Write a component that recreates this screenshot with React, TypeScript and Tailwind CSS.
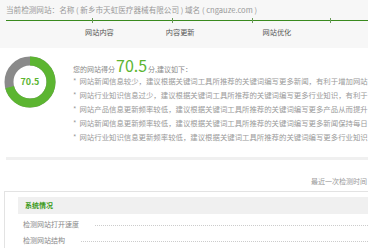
import React from "react";

const font = { fontFamily: '"Noto Sans CJK SC", "Noto Sans", sans-serif' };

function Donut() {
  const r = 21;
  const c = 2 * Math.PI * r;
  const green = c * 0.705;
  return (
    <div className="relative w-[52px] h-[52px]">
      <svg width="52" height="52" viewBox="0 0 52 52">
        <circle cx="26" cy="26" r={r} fill="none" stroke="#8a8a8a" strokeWidth="9" />
        <circle
          cx="26"
          cy="26"
          r={r}
          fill="none"
          stroke="#5cb531"
          strokeWidth="9"
          strokeDasharray={`${green} ${c}`}
          transform="rotate(-90 26 26)"
        />
      </svg>
      <div className="absolute inset-0 flex items-center justify-center text-[9px] font-bold text-[#5cb531]">
        70.5
      </div>
    </div>
  );
}

const bullets = [
  "网站新闻信息较少，建议根据关键词工具所推荐的关键词编写更多新闻，有利于增加网站",
  "网站行业知识信息过少，建议根据关键词工具所推荐的关键词编写更多行业知识，有利于",
  "网站产品信息更新频率较低，建议根据关键词工具所推荐的关键词编写更多产品从而提升",
  "网站新闻信息更新频率较低，建议根据关键词工具所推荐的关键词编写更多新闻保持每日",
  "网站行业知识信息更新频率较低，建议根据关键词工具所推荐的关键词编写更多行业知识",
];

export default function App() {
  return (
    <div className="w-[368px] h-[249px] overflow-hidden bg-white" style={font}>
      <div className="bg-[#f7f7f7] h-[48px] pt-[4px]">
        <div className="pl-[6px] text-[7.6px] leading-[11px] text-[#999] whitespace-nowrap">
          当前检测网站：名称 ( 新乡市天虹医疗器械有限公司 ) 域名 ( cngauze.com )
        </div>
        <div className="relative ml-[6px] mt-[5px] h-[1px] bg-[#3a8a1e]">
          <div className="absolute left-[86px] top-[-2px] w-[1px] h-[5px] bg-[#6a9a5a]" />
          <div className="absolute left-[166px] top-[-2px] w-[1px] h-[5px] bg-[#6a9a5a]" />
          <div className="absolute left-[246px] top-[-2px] w-[1px] h-[5px] bg-[#6a9a5a]" />
          <div className="absolute left-[324px] top-[-2px] w-[1px] h-[5px] bg-[#6a9a5a]" />
        </div>
        <div className="flex mt-[6px] text-[7.2px] leading-[11px] text-[#555] whitespace-nowrap">
          <span className="ml-[85px]">网站内容</span>
          <span className="ml-[52px]">内容更新</span>
          <span className="ml-[68px]">网站优化</span>
        </div>
      </div>

      <div className="flex pt-[8px]">
        <div className="ml-[4px]">
          <Donut />
        </div>
        <div className="ml-[17px] flex-1 min-w-0 whitespace-nowrap">
          <div className="flex items-end h-[18px] text-[7px] text-[#888]">
            <span className="leading-[10px]">您的网站得分</span>
            <span className="text-[16px] leading-[17px] text-[#5cb531] mx-[1px]">70.5</span>
            <span className="leading-[10px]">分,建议如下：</span>
          </div>
          {bullets.map((b) => (
            <div key={b} className="h-[14px] leading-[14px] text-[7.4px] text-[#999]">
              <span className="mr-[3px]">*</span>
              {b}
            </div>
          ))}
        </div>
      </div>

      <div className="ml-[6px] mt-[13px] h-[3px] bg-[#f0f0f0]" />

      <div className="pl-[311px] mt-[16px] text-[7px] leading-[10px] text-[#999] whitespace-nowrap">
        最近一次检测时间
      </div>

      <div className="ml-[4px] mt-[5px] border-t border-l border-[#e3e3e3] pl-[13px] pt-[5px]">
        <div className="h-[17px] bg-[#f0f0f0] pl-[7px] flex items-center text-[7px] font-bold text-[#3a9a1a]">
          系统情况
        </div>
        <div className="flex items-center h-[16px] mt-[2px] pl-[5px] text-[7px] text-[#888]">
          <span className="whitespace-nowrap">检测网站打开速度</span>
          <div className="flex-1 ml-[16px] border-b border-dotted border-[#ccc] mt-[2px]" />
        </div>
        <div className="flex items-center h-[16px] pl-[5px] text-[7px] text-[#888]">
          <span className="whitespace-nowrap">检测网站结构</span>
          <div className="flex-1 ml-[16px] border-b border-dotted border-[#ccc] mt-[2px]" />
        </div>
      </div>
    </div>
  );
}
